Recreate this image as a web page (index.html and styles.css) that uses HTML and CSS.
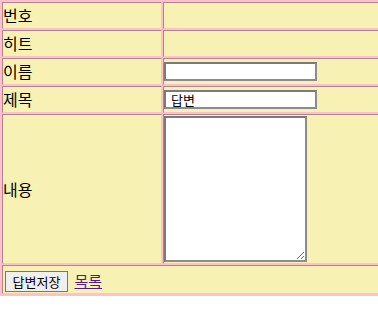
FILE: index.html
```html
<!DOCTYPE html>
<html lang="ko">
  <head>
    <meta charset="UTF-8" />
    <title>답변</title>
    <link rel="stylesheet" href="styles.css">
  </head>
  <body>
    <form>
      <table class="board">
        <tr>
          <td class="label">번호</td>
          <td class="value"></td>
        </tr>
        <tr>
          <td class="label">히트</td>
          <td class="value"></td>
        </tr>
        <tr>
          <td class="label">이름</td>
          <td class="value"><input type="text" class="field"></td>
        </tr>
        <tr>
          <td class="label">제목</td>
          <td class="value"><input type="text" class="field" value="답변"></td>
        </tr>
        <tr>
          <td class="label">내용</td>
          <td class="value"><textarea class="content"></textarea></td>
        </tr>
        <tr>
          <td colspan="2" class="actions">
            <button type="submit" class="save">답변저장</button>
            <a href="#" class="list-link">목록</a>
          </td>
        </tr>
      </table>
    </form>
  </body>
</html>
```

FILE: styles.css
```css
html {
  overflow: hidden;
}

body {
  margin: 0;
  padding: 0;
  background-color: #ffffff;
  font-family: "Noto Sans CJK KR", "Noto Sans", sans-serif;
}

form {
  margin: 0;
}

.board {
  width: 400px;
  border-collapse: separate;
  border-spacing: 1px;
  border: 1px solid #ffc0cb;
  background-color: #ffc0cb;
}

.board td {
  background-color: #f7f2b4;
  border: 1px solid;
  border-color: #b0868e #ffc0cb #ffc0cb #b0868e;
  padding: 0;
  font-size: 16px;
  line-height: 25px;
  color: #000;
}

.label {
  width: 158px;
  padding-left: 1px;
}

.field {
  display: block;
  box-sizing: border-box;
  width: 153px;
  height: 19px;
  margin: 0;
  padding: 0 5px;
  border: 2px solid #7a7a7a;
  border-right-color: #8c8c8c;
  border-bottom-color: #8c8c8c;
  background: #fff;
  font-family: "Noto Sans CJK KR", sans-serif;
  font-size: 13px;
  line-height: 15px;
}

.content {
  display: block;
  box-sizing: border-box;
  width: 143px;
  height: 146px;
  margin: 1px 0;
  padding: 2px;
  border: 2px solid #7a7a7a;
  border-right-color: #8c8c8c;
  border-bottom-color: #8c8c8c;
  background: #fff;
  resize: both;
}

.actions {
  padding-left: 2px;
}

.save {
  box-sizing: border-box;
  width: 63px;
  height: 21px;
  margin: 1px 2px 0 2px;
  padding: 0;
  border: 1px solid #767676;
  border-radius: 0;
  background-color: #efefef;
  font-family: "Noto Sans CJK KR", sans-serif;
  font-size: 13px;
  line-height: 17px;
  color: #000;
  vertical-align: middle;
}

.list-link {
  color: #551a8b;
  font-size: 15px;
  vertical-align: middle;
}
```
